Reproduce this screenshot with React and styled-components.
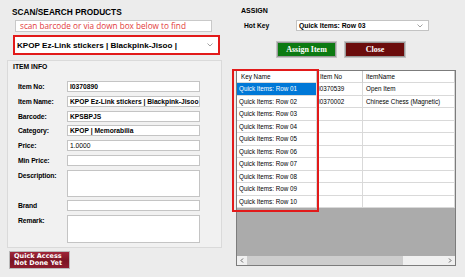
import React from "react";
import styled, { createGlobalStyle } from "styled-components";

const Global = createGlobalStyle`
  html, body { margin: 0; padding: 0; background: #ececec; }
  body { width: 465px; height: 277px; overflow: hidden; font-family: "Liberation Sans", Arial, sans-serif; color: #000; }
`;

const SANS = `"Liberation Sans", Arial, sans-serif`;

const Page = styled.div`
  width: 465px;
  height: 277px;
  display: grid;
  grid-template-columns: 225px 240px;
  background: #ececec;
`;

const Column = styled.div`
  display: flex;
  flex-direction: column;
  align-items: flex-start;
`;

const SectionTitle = styled.div`
  margin: ${(p) => p.$mt}px 0 0 ${(p) => p.$ml}px;
  font: bold ${(p) => p.$fs}px/9px ${SANS};
  white-space: nowrap;
`;

const ScanInput = styled.div`
  margin: 3px 0 0 15px;
  width: 197px;
  height: 12px;
  box-sizing: border-box;
  background: #fff;
  border: 1px solid #c9c9c9;
  color: #e23b3b;
  font: 8.2px/10px "Open Sans", ${SANS};
  padding-left: 4px;
  white-space: nowrap;
  overflow: hidden;
`;

const Highlight = styled.div`
  margin: 3px 0 0 13px;
  width: 207px;
  height: 20px;
  box-sizing: border-box;
  border: 2px solid #e21a1a;
  display: flex;
`;

const Combo = styled.div`
  flex: ${(p) => (p.$w ? "none" : 1)};
  width: ${(p) => (p.$w ? `${p.$w}px` : "auto")};
  height: ${(p) => (p.$h ? `${p.$h}px` : "auto")};
  box-sizing: border-box;
  display: flex;
  align-items: center;
  justify-content: space-between;
  background: #fff;
  border: ${(p) => (p.$border ? "1px solid #c3c3c3" : "none")};
  padding: 0 5px 0 2px;
  font: bold ${(p) => p.$fs}px ${SANS};
  white-space: nowrap;
`;

const Chevron = () => (
  <svg width="6" height="4" viewBox="0 0 6 4">
    <polyline points="0.5,0.5 3,3 5.5,0.5" fill="none" stroke="#8a8a8a" strokeWidth="0.8" />
  </svg>
);

const Group = styled.div`
  margin: 5px 0 0 7px;
  width: 215px;
  height: 188px;
  box-sizing: border-box;
  border: 1px solid #dadada;
  background: #f1f1f1;
  padding-top: 2px;
  display: flex;
  flex-direction: column;
`;

const GroupTitle = styled.div`
  margin-left: 5px;
  font: bold 6.8px/8px ${SANS};
`;

const Fields = styled.div`
  margin-top: 10px;
  padding-left: 10px;
  display: grid;
  grid-template-columns: 49px 133px;
  row-gap: 3.75px;
`;

const Label = styled.div`
  font: bold 6.8px ${SANS};
  display: flex;
  align-items: ${(p) => (p.$tall ? "flex-start" : "center")};
  padding-top: ${(p) => (p.$tall ? 2 : 0)}px;
  white-space: nowrap;
  letter-spacing: -0.1px;
`;

const Field = styled.div`
  height: ${(p) => p.$h || 11}px;
  box-sizing: border-box;
  background: #fff;
  border: 1px solid #c4c4c4;
  font: ${(p) => (p.$regular ? "normal" : "bold")} 6.7px/9px ${SANS};
  padding-left: 2px;
  white-space: nowrap;
  overflow: hidden;
`;

const QuickButton = styled.div`
  margin: 3px 0 0 9px;
  width: 61px;
  height: 18px;
  box-sizing: border-box;
  border: 1px solid #b9b9b9;
  background: linear-gradient(#a02639, #7a1423 55%, #8e1d2e);
  color: #fff;
  font: bold 6.5px/7.6px "DejaVu Sans", Verdana, sans-serif;
  padding: 0.5px 0 0 4px;
  white-space: nowrap;
`;

const HotKeyRow = styled.div`
  margin: 5px 0 0 19px;
  display: flex;
  align-items: center;
`;

const HotKeyLabel = styled.div`
  width: 52px;
  font: bold 6.7px ${SANS};
`;

const ButtonRow = styled.div`
  margin: 10px 0 0 51px;
  display: flex;
  gap: 7px;
`;

const ActionButton = styled.div`
  width: ${(p) => p.$w}px;
  height: 17px;
  box-sizing: border-box;
  border: 1px solid #c4c4c4;
  box-shadow: inset 0 0 0 1px #9a9a9a;
  background: ${(p) => p.$bg};
  color: #fff;
  font: bold 8px/15px "Liberation Serif", "Times New Roman", serif;
  text-align: center;
`;

const GridWrap = styled.div`
  position: relative;
  margin: 12px 0 0 11px;
  width: 220px;
  height: 196px;
  box-sizing: border-box;
  border: 1px solid #7c7c7c;
  display: flex;
  flex-direction: column;
  background: #ababab;
`;

const Table = styled.div`
  display: grid;
  grid-template-columns: 80px 46px 1fr;
  grid-template-rows: 12px repeat(10, 12.5px);
  background: #fff;
`;

const Cell = styled.div`
  box-sizing: border-box;
  border-right: 1px solid ${(p) => (p.$head ? "#c8c8c8" : "#d9d9d9")};
  border-bottom: 1px solid #d9d9d9;
  background: ${(p) => (p.$sel ? "#0078d7" : "#fff")};
  color: ${(p) => (p.$sel ? "#fff" : "#000")};
  font: 6.3px ${SANS};
  padding-left: ${(p) => p.$pl ?? 2}px;
  display: flex;
  align-items: center;
  white-space: nowrap;
  overflow: hidden;
`;

const Filler = styled.div`
  flex: 1;
  background: #ababab;
`;

const ScrollBar = styled.div`
  height: 9px;
  background: #f0f0f0;
  display: flex;
  align-items: center;
`;

const ScrollArrow = styled.div`
  width: 10px;
  height: 9px;
  display: flex;
  align-items: center;
  justify-content: center;
`;

const ScrollTrack = styled.div`
  flex: 1;
  height: 9px;
  display: flex;
  align-items: center;
`;

const Thumb = styled.div`
  width: 156px;
  height: 9px;
  background: #cdcdcd;
`;

const RedOverlay = styled.div`
  position: absolute;
  left: -5px;
  top: -2px;
  width: 87px;
  height: 143px;
  box-sizing: border-box;
  border: 2px solid #e21a1a;
  pointer-events: none;
`;

const Arrow = ({ dir }) => (
  <svg width="4" height="5" viewBox="0 0 4 5">
    <polyline
      points={dir === "left" ? "3,0.5 1,2.5 3,4.5" : "1,0.5 3,2.5 1,4.5"}
      fill="none"
      stroke="#555"
      strokeWidth="0.9"
    />
  </svg>
);

const fields = [
  { label: "Item No:", value: "I0370890" },
  { label: "Item Name:", value: "KPOP Ez-Link stickers | Blackpink-Jisoo" },
  { label: "Barcode:", value: "KPSBPJS" },
  { label: "Category:", value: "KPOP | Memorabilia" },
  { label: "Price:", value: "1.0000", regular: true },
  { label: "Min Price:", value: "" },
  { label: "Description:", value: "", h: 27 },
  { label: "Brand", value: "" },
  { label: "Remark:", value: "", h: 28 },
];

const rows = Array.from({ length: 10 }, (_, i) => ({
  key: `Quick Items: Row ${String(i + 1).padStart(2, "0")}`,
  no: i === 0 ? "I0370539" : i === 1 ? "I0370002" : "",
  name: i === 0 ? "Open Item" : i === 1 ? "Chinese Chess (Magnetic)" : "",
}));

export default function App() {
  return (
    <>
      <Global />
      <Page>
        <Column>
          <SectionTitle $mt={8} $ml={12} $fs={8.3}>SCAN/SEARCH PRODUCTS</SectionTitle>
          <ScanInput>scan barcode or via down box below to find</ScanInput>
          <Highlight>
            <Combo $fs={8.1}>
              <span>KPOP Ez-Link stickers | Blackpink-Jisoo |</span>
              <Chevron />
            </Combo>
          </Highlight>
          <Group>
            <GroupTitle>ITEM INFO</GroupTitle>
            <Fields>
              {fields.map((f) => (
                <React.Fragment key={f.label}>
                  <Label $tall={!!f.h}>{f.label}</Label>
                  <Field $h={f.h} $regular={f.regular}>{f.value}</Field>
                </React.Fragment>
              ))}
            </Fields>
          </Group>
          <QuickButton>
            Quick Access
            <br />
            Not Done Yet
          </QuickButton>
        </Column>
        <Column>
          <SectionTitle $mt={6} $ml={16} $fs={7}>ASSIGN</SectionTitle>
          <HotKeyRow>
            <HotKeyLabel>Hot Key</HotKeyLabel>
            <Combo $w={133} $h={11} $fs={6.8} $border>
              <span>Quick Items: Row 03</span>
              <Chevron />
            </Combo>
          </HotKeyRow>
          <ButtonRow>
            <ActionButton $w={61} $bg="#0c7a12">Assign Item</ActionButton>
            <ActionButton $w={62} $bg="#6b0c0c">Close</ActionButton>
          </ButtonRow>
          <GridWrap>
            <Table>
              <Cell $head $pl={4}>Key Name</Cell>
              <Cell $head $pl={3}>Item No</Cell>
              <Cell $head $pl={3}>ItemName</Cell>
              {rows.map((r, i) => (
                <React.Fragment key={r.key}>
                  <Cell $sel={i === 0}>{r.key}</Cell>
                  <Cell $pl={1}>{r.no}</Cell>
                  <Cell $pl={3}>{r.name}</Cell>
                </React.Fragment>
              ))}
            </Table>
            <Filler />
            <ScrollBar>
              <ScrollArrow><Arrow dir="left" /></ScrollArrow>
              <ScrollTrack><Thumb /></ScrollTrack>
              <ScrollArrow><Arrow dir="right" /></ScrollArrow>
            </ScrollBar>
            <RedOverlay />
          </GridWrap>
        </Column>
      </Page>
    </>
  );
}
